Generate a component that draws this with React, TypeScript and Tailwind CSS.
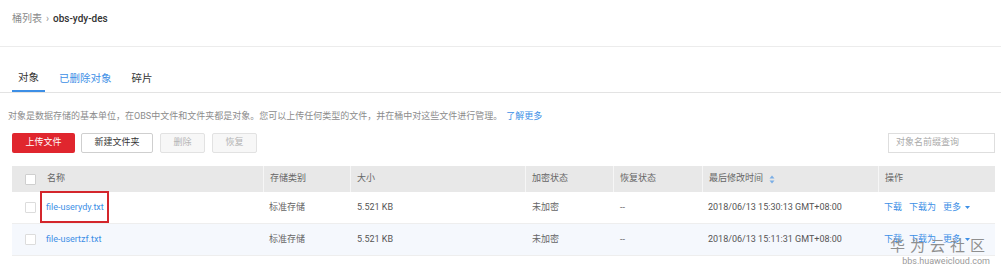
import React from "react";

const font = { fontFamily: '"Roboto", "Noto Sans CJK SC", sans-serif' };

const rows = [
  { name: "file-userydy.txt", marked: true, bg: "bg-white", time: "2018/06/13 15:30:13 GMT+08:00" },
  { name: "file-usertzf.txt", marked: false, bg: "bg-[#f5f8fd]", time: "2018/06/13 15:11:31 GMT+08:00" },
];

const cols = "grid grid-cols-[251px_87px_175px_88px_89px_176px_117px]";

function Checkbox({ header }: { header?: boolean }) {
  return (
    <span
      className={
        "ml-[13px] mr-[10px] inline-block h-[11px] w-[11px] shrink-0 rounded-[1px] border bg-white " +
        (header ? "border-[#cfcfcf]" : "border-[#dcdcdc]")
      }
    />
  );
}

function HeadCell({ children, first }: { children: React.ReactNode; first?: boolean }) {
  return (
    <div className={"flex h-full items-center " + (first ? "" : "border-l border-[#f6f6f6] pl-[6px]")}>
      {children}
    </div>
  );
}

export default function App() {
  return (
    <div className="relative h-[273px] w-[1001px] overflow-hidden bg-white text-[9px] text-[#666]" style={font}>
      {/* breadcrumb */}
      <div className="flex h-[47px] items-start border-b border-[#ececec] pl-[12px] pt-[11px] text-[10px]">
        <span className="text-[#8a8a8a]">桶列表</span>
        <span className="mx-[4px] text-[#999]">›</span>
        <span className="font-medium text-[#333]">obs-ydy-des</span>
      </div>

      {/* tabs */}
      <div className="mt-[19px] flex h-[27px] items-stretch border-b border-[#e3e3e3] pl-[12px] text-[10.5px]">
        <div className="flex w-[33px] items-center justify-center border-b-2 border-[#3d8fe6] text-[#333]">对象</div>
        <div className="ml-[14px] flex items-center text-[#3d8fe6]">已删除对象</div>
        <div className="ml-[20px] flex items-center text-[#333]">碎片</div>
      </div>

      {/* description */}
      <div className="mt-[17px] pl-[8px] leading-[12px] text-[#8c8c8c]">
        对象是数据存储的基本单位，在OBS中文件和文件夹都是对象。您可以上传任何类型的文件，并在桶中对这些文件进行管理。
        <span className="ml-[4px] text-[#3d8fe6]">了解更多</span>
      </div>

      {/* toolbar */}
      <div className="mt-[11px] flex h-[20px] items-stretch pl-[12px] pr-[6px]">
        <button className="w-[63px] rounded-[2px] bg-[#e0262e] text-[9px] text-white">上传文件</button>
        <button className="ml-[6px] w-[72px] rounded-[2px] border border-[#cfcfcf] bg-white text-[9px] text-[#333]">
          新建文件夹
        </button>
        <button className="ml-[7px] w-[45px] rounded-[2px] border border-[#e2e2e2] bg-[#f7f7f7] text-[9px] text-[#b5b5b5]">
          删除
        </button>
        <button className="ml-[7px] w-[45px] rounded-[2px] border border-[#e2e2e2] bg-[#f7f7f7] text-[9px] text-[#b5b5b5]">
          恢复
        </button>
        <div className="ml-auto flex w-[107px] items-center border border-[#dedede] pl-[7px] text-[#aaa]">
          对象名前缀查询
        </div>
      </div>

      {/* table */}
      <div className="ml-[12px] mt-[13px] w-[983px]">
        <div className={cols + " h-[26px] bg-[#e8e8e8] text-[#666]"}>
          <HeadCell first>
            <Checkbox header />
            <span className="ml-[1px]">名称</span>
          </HeadCell>
          <HeadCell>存储类别</HeadCell>
          <HeadCell>大小</HeadCell>
          <HeadCell>加密状态</HeadCell>
          <HeadCell>恢复状态</HeadCell>
          <HeadCell>
            最后修改时间
            <svg className="ml-[6px]" width="6" height="9" viewBox="0 0 6 9">
              <path d="M3 0.5 L5.5 3.5 L0.5 3.5 Z" fill="#7aaee6" />
              <path d="M3 8.5 L5.5 5.5 L0.5 5.5 Z" fill="#7aaee6" />
            </svg>
          </HeadCell>
          <HeadCell>操作</HeadCell>
        </div>

        {rows.map((r) => (
          <div key={r.name} className={cols + " h-[32px] border-b border-[#eeeeee] " + r.bg}>
            <div className="flex items-center">
              <Checkbox />
              <span className="relative text-[#3d8fe6]">
                {r.name}
                {r.marked && (
                  <span className="absolute left-[-6px] right-[-5px] top-[-10px] bottom-[-9px] border-2 border-[#d4262c]" />
                )}
              </span>
            </div>
            <div className="flex items-center pl-[6px]">标准存储</div>
            <div className="flex items-center pl-[7px] text-[#555]">5.521 KB</div>
            <div className="flex items-center pl-[7px]">未加密</div>
            <div className="flex items-center pl-[7px]">--</div>
            <div className="flex items-center pl-[6px] text-[#555]">{r.time}</div>
            <div className="flex items-center gap-[7px] pl-[6px] text-[#3d8fe6]">
              <span>下载</span>
              <span>下载为</span>
              <span className="flex items-center">
                更多
                <svg className="ml-[4px]" width="5" height="3" viewBox="0 0 5 3">
                  <path d="M0 0 L5 0 L2.5 3 Z" fill="#3d8fe6" />
                </svg>
              </span>
            </div>
          </div>
        ))}
      </div>

      {/* watermark */}
      <div className="pointer-events-none absolute right-[11px] top-[237px] flex flex-col items-end whitespace-nowrap">
        <div className="text-[15px] leading-[18px] tracking-[5px] text-[#8f8f8f]">华为云社区</div>
        <div className="mt-[1px] text-[9px] leading-[10px] text-[#9a9a9a]">bbs.huaweicloud.com</div>
      </div>
    </div>
  );
}
